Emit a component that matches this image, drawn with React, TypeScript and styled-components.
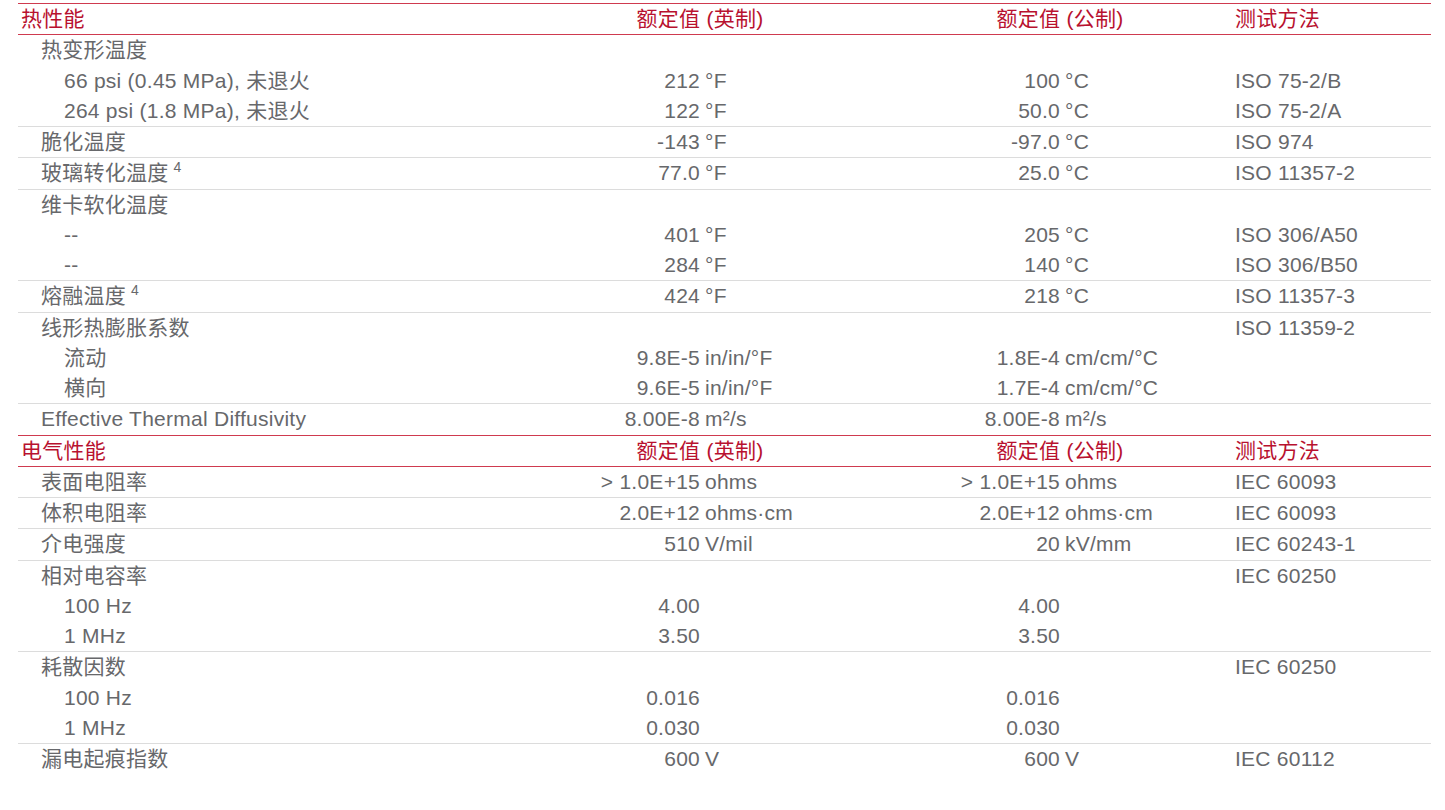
import React from "react";
import styled, { createGlobalStyle } from "styled-components";

const GlobalStyle = createGlobalStyle`
  body {
    margin: 0;
    background: #ffffff;
    font-family: "Liberation Sans", Arial, "Noto Sans CJK SC", sans-serif;
  }
`;

const RED = "#b8112f";
const LINE_RED = "#cf3a4f";
const TEXT = "#67686b";

type Row = {
  label: string;
  level: 1 | 2;
  sup?: string;
  imp?: [string, string?];
  met?: [string, string?];
  test?: string;
};

type Section = {
  title: string;
  groups: Row[][];
};

const sections: Section[] = [
  {
    title: "热性能",
    groups: [
      [
        { label: "热变形温度", level: 1 },
        { label: "66 psi (0.45 MPa), 未退火", level: 2, imp: ["212", "°F"], met: ["100", "°C"], test: "ISO 75-2/B" },
        { label: "264 psi (1.8 MPa), 未退火", level: 2, imp: ["122", "°F"], met: ["50.0", "°C"], test: "ISO 75-2/A" },
      ],
      [{ label: "脆化温度", level: 1, imp: ["-143", "°F"], met: ["-97.0", "°C"], test: "ISO 974" }],
      [{ label: "玻璃转化温度", sup: "4", level: 1, imp: ["77.0", "°F"], met: ["25.0", "°C"], test: "ISO 11357-2" }],
      [
        { label: "维卡软化温度", level: 1 },
        { label: "--", level: 2, imp: ["401", "°F"], met: ["205", "°C"], test: "ISO 306/A50" },
        { label: "--", level: 2, imp: ["284", "°F"], met: ["140", "°C"], test: "ISO 306/B50" },
      ],
      [{ label: "熔融温度", sup: "4", level: 1, imp: ["424", "°F"], met: ["218", "°C"], test: "ISO 11357-3" }],
      [
        { label: "线形热膨胀系数", level: 1, test: "ISO 11359-2" },
        { label: "流动", level: 2, imp: ["9.8E-5", "in/in/°F"], met: ["1.8E-4", "cm/cm/°C"] },
        { label: "横向", level: 2, imp: ["9.6E-5", "in/in/°F"], met: ["1.7E-4", "cm/cm/°C"] },
      ],
      [{ label: "Effective Thermal Diffusivity", level: 1, imp: ["8.00E-8", "m²/s"], met: ["8.00E-8", "m²/s"] }],
    ],
  },
  {
    title: "电气性能",
    groups: [
      [{ label: "表面电阻率", level: 1, imp: ["> 1.0E+15", "ohms"], met: ["> 1.0E+15", "ohms"], test: "IEC 60093" }],
      [{ label: "体积电阻率", level: 1, imp: ["2.0E+12", "ohms·cm"], met: ["2.0E+12", "ohms·cm"], test: "IEC 60093" }],
      [{ label: "介电强度", level: 1, imp: ["510", "V/mil"], met: ["20", "kV/mm"], test: "IEC 60243-1" }],
      [
        { label: "相对电容率", level: 1, test: "IEC 60250" },
        { label: "100 Hz", level: 2, imp: ["4.00"], met: ["4.00"] },
        { label: "1 MHz", level: 2, imp: ["3.50"], met: ["3.50"] },
      ],
      [
        { label: "耗散因数", level: 1, test: "IEC 60250" },
        { label: "100 Hz", level: 2, imp: ["0.016"], met: ["0.016"] },
        { label: "1 MHz", level: 2, imp: ["0.030"], met: ["0.030"] },
      ],
      [{ label: "漏电起痕指数", level: 1, imp: ["600", "V"], met: ["600", "V"], test: "IEC 60112" }],
    ],
  },
];

const Sheet = styled.div`
  width: 1413px;
  margin: 3px 0 0 18px;
  font-size: 21px;
  letter-spacing: 0.25px;
  color: ${TEXT};
`;

const RowGrid = styled.div`
  display: grid;
  grid-template-columns: 502px 180px 180px 180px 175px 196px;
  height: 30.25px;
  line-height: 30px;
  white-space: nowrap;
`;

const HeadRow = styled(RowGrid)`
  color: ${RED};
  border-top: 1px solid ${LINE_RED};
  border-bottom: 1px solid ${LINE_RED};
`;

const HeadTitle = styled.div`
  padding-left: 3px;
`;

const ColHead = styled.div<{ $shift?: number }>`
  grid-column: span 2;
  text-align: center;
  padding-left: ${(p) => p.$shift ?? 0}px;
`;

const Group = styled.div`
  & + & {
    border-top: 1px solid #dcdcdc;
  }
`;

const Label = styled.div<{ $level: number }>`
  padding-left: ${(p) => (p.$level === 1 ? 23 : 46)}px;
`;

const Sup = styled.sup`
  font-size: 14px;
  line-height: 0;
  margin-left: 5px;
  vertical-align: 8px;
`;

const Value = styled.div`
  text-align: right;
`;

const Unit = styled.div`
  padding-left: 5px;
`;

const Test = styled.div``;

function DataRow({ row }: { row: Row }) {
  return (
    <RowGrid>
      <Label $level={row.level}>
        {row.label}
        {row.sup && <Sup>{row.sup}</Sup>}
      </Label>
      <Value>{row.imp?.[0]}</Value>
      <Unit>{row.imp?.[1]}</Unit>
      <Value>{row.met?.[0]}</Value>
      <Unit>{row.met?.[1]}</Unit>
      <Test>{row.test}</Test>
    </RowGrid>
  );
}

export default function App() {
  return (
    <>
      <GlobalStyle />
      <Sheet>
        {sections.map((s) => (
          <div key={s.title}>
            <HeadRow>
              <HeadTitle>{s.title}</HeadTitle>
              <ColHead>额定值 (英制)</ColHead>
              <ColHead $shift={5}>额定值 (公制)</ColHead>
              <Test>测试方法</Test>
            </HeadRow>
            {s.groups.map((g, i) => (
              <Group key={i}>
                {g.map((r, j) => (
                  <DataRow key={j} row={r} />
                ))}
              </Group>
            ))}
          </div>
        ))}
      </Sheet>
    </>
  );
}
